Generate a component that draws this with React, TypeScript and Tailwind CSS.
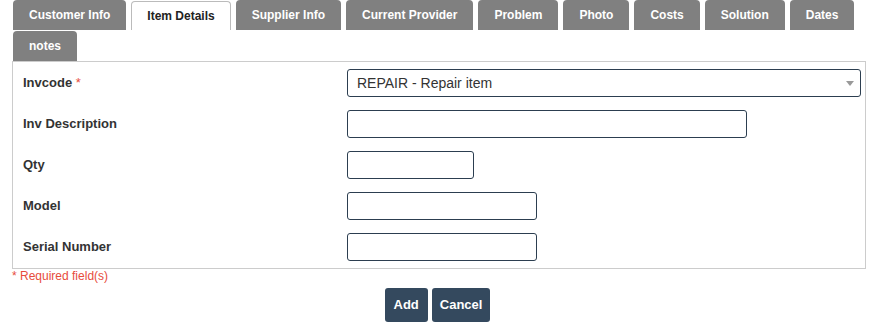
import { useState } from 'react'

const tabs = [
  'Customer Info',
  'Item Details',
  'Supplier Info',
  'Current Provider',
  'Problem',
  'Photo',
  'Costs',
  'Solution',
  'Dates',
  'notes',
]

const fields = [
  { label: 'Invcode', required: true, kind: 'select', width: 'w-[514px]' },
  { label: 'Inv Description', kind: 'text', width: 'w-[400px]' },
  { label: 'Qty', kind: 'text', width: 'w-[127px]' },
  { label: 'Model', kind: 'text', width: 'w-[190px]' },
  { label: 'Serial Number', kind: 'text', width: 'w-[190px]' },
]

const App = () => {
  const [active, setActive] = useState('Item Details')

  return (
    <div className="w-[886px] h-[330px] bg-white font-['Liberation_Sans',Arial,sans-serif] text-[13px] text-[#333]">
      <div className="pl-[12px] w-[866px]">
        {/* tab strip */}
        <div className="flex flex-wrap gap-x-[5px] gap-y-[1px] pl-[1px]">
          {tabs.map((t) =>
            t === active ? (
              <button
                key={t}
                onClick={() => setActive(t)}
                className="mt-[1px] h-[29px] px-[15px] rounded-t-[4px] border border-b-0 border-[#bbb] bg-white text-[#222] font-bold text-[12px] leading-[27px]"
              >
                {t}
              </button>
            ) : (
              <button
                key={t}
                onClick={() => setActive(t)}
                className="h-[30px] px-[16px] rounded-t-[4px] bg-[#808080] text-white font-bold text-[12px] leading-[30px]"
              >
                {t}
              </button>
            )
          )}
        </div>

        {/* form panel */}
        <div className="border border-[#ccc] py-[7px] flex flex-col gap-[13px]">
          {fields.map((f) => (
            <div key={f.label} className="flex items-center h-[28px]">
              <div className="w-[334px] pl-[10px] font-bold">
                {f.label}
                {f.required && <span className="text-[#e74c3c] font-normal"> *</span>}
              </div>
              {f.kind === 'select' ? (
                <div className={`${f.width} h-[28px] border border-[#2c3e50] rounded-[3px] flex items-center justify-between pl-[9px] pr-[6px] text-[14px]`}>
                  <span>REPAIR - Repair item</span>
                  <svg width="8" height="5" viewBox="0 0 8 5">
                    <path d="M0 0h8L4 5z" fill="#999" />
                  </svg>
                </div>
              ) : (
                <input
                  className={`${f.width} h-[28px] border border-[#2c3e50] rounded-[3px] px-2 outline-none`}
                />
              )}
            </div>
          ))}
        </div>

        <div className="text-[12px] leading-[14px] text-[#e74c3c]">* Required field(s)</div>

        <div className="flex justify-center gap-[4px] mt-[5px] pr-[3px]">
          <button className="h-[34px] px-[9px] rounded-[3px] bg-[#34495e] text-white font-bold text-[13px]">Add</button>
          <button className="h-[34px] px-[8px] rounded-[3px] bg-[#34495e] text-white font-bold text-[13px]">Cancel</button>
        </div>
      </div>
    </div>
  )
}

export default App
